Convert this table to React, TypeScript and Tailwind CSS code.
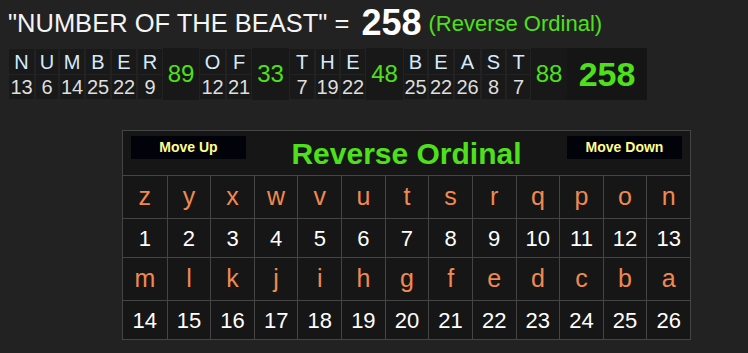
import React from "react";

type Cell = { l?: string; n?: string; sum?: string; total?: string; w: number };

const top: Cell[] = [
  { l: "N", n: "13", w: 27 },
  { l: "U", n: "6", w: 24 },
  { l: "M", n: "14", w: 26 },
  { l: "B", n: "25", w: 26 },
  { l: "E", n: "22", w: 26 },
  { l: "R", n: "9", w: 26 },
  { sum: "89", w: 36 },
  { l: "O", n: "12", w: 27 },
  { l: "F", n: "21", w: 26 },
  { sum: "33", w: 37 },
  { l: "T", n: "7", w: 26 },
  { l: "H", n: "19", w: 25 },
  { l: "E", n: "22", w: 26 },
  { sum: "48", w: 37 },
  { l: "B", n: "25", w: 25 },
  { l: "E", n: "22", w: 26 },
  { l: "A", n: "26", w: 27 },
  { l: "S", n: "8", w: 25 },
  { l: "T", n: "7", w: 25 },
  { sum: "88", w: 36 },
  { total: "258", w: 80 },
];

const letters = "zyxwvutsrqponmlkjihgfedcba".split("");

function TopCell({ c }: { c: Cell }) {
  if (c.total) {
    return (
      <div
        className="flex items-center justify-center bg-[#151515] text-[34px] font-bold text-[#4fe01c]"
        style={{ width: c.w }}
      >
        {c.total}
      </div>
    );
  }
  if (c.sum) {
    return (
      <div
        className="flex items-center justify-center bg-[#181818] text-[24px] text-[#4fe01c]"
        style={{ width: c.w }}
      >
        {c.sum}
      </div>
    );
  }
  return (
    <div className="flex flex-col" style={{ width: c.w }}>
      <div className="flex h-[27px] items-center justify-center border border-[#222] bg-[#191919] text-[20px] text-[#d4ebff]">
        {c.l}
      </div>
      <div className="flex h-[25px] items-center justify-center border border-t-0 border-[#222] bg-[#191919] text-[20px] text-[#dedede]">
        {c.n}
      </div>
    </div>
  );
}

function Row({ items, kind }: { items: string[]; kind: "l" | "n" }) {
  return (
    <div
      className={
        "grid grid-cols-13 border-t border-[#444] " +
        (kind === "l" ? "h-[43px]" : "h-[39px]")
      }
    >
      {items.map((t, i) => (
        <div
          key={i}
          className={
            "flex items-center justify-center border-[#444] " +
            (i > 0 ? "border-l " : "") +
            (kind === "l"
              ? "text-[25px] text-[#f0894f]"
              : "text-[22px] text-white")
          }
        >
          {t}
        </div>
      ))}
    </div>
  );
}

export default function App() {
  const nums = Array.from({ length: 26 }, (_, i) => String(i + 1));
  return (
    <div
      className="h-[353px] w-[748px] overflow-hidden bg-[#222] text-white"
      style={{ fontFamily: '"Liberation Sans", Arial, sans-serif' }}
    >
      <div className="flex h-[48px] items-center whitespace-nowrap pl-[8px] pb-[2px]">
        <span className="text-[25.5px] text-[#f4f4f4]">"NUMBER OF THE BEAST" = </span>
        <span className="ml-[12px] text-[36px] font-bold leading-none text-white">258</span>
        <span className="ml-[7px] text-[22px] text-[#4fe01c]">(Reverse Ordinal)</span>
      </div>

      <div className="ml-[8px] flex h-[52px] w-fit bg-[#181818]">
        {top.map((c, i) => (
          <TopCell key={i} c={c} />
        ))}
      </div>

      <div className="ml-[122px] mt-[30px] w-[569px] border border-[#444] bg-[#161616]">
        <div className="flex h-[44px] items-start justify-between px-[8px] pt-[5px]">
          <button className="h-[23px] w-[115px] bg-[#02020a] text-[14px] font-bold text-[#ffff8a]">
            Move Up
          </button>
          <div className="-mt-[2px] text-[30px] font-bold leading-[40px] text-[#4fe01c]">
            Reverse Ordinal
          </div>
          <button className="h-[23px] w-[115px] bg-[#02020a] text-[14px] font-bold text-[#ffff8a]">
            Move Down
          </button>
        </div>
        <Row items={letters.slice(0, 13)} kind="l" />
        <Row items={nums.slice(0, 13)} kind="n" />
        <Row items={letters.slice(13)} kind="l" />
        <Row items={nums.slice(13)} kind="n" />
      </div>
    </div>
  );
}
